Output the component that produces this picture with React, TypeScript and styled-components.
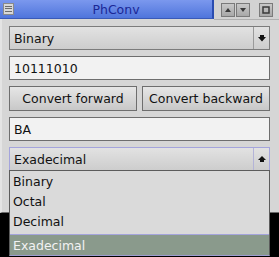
import React from 'react';
import styled, { createGlobalStyle } from 'styled-components';

const GlobalStyle = createGlobalStyle`
  html, body {
    margin: 0;
    padding: 0;
    background: #000;
  }
  body {
    font-family: "DejaVu Sans", "Liberation Sans", sans-serif;
    font-size: 12.5px;
    color: #111;
  }
`;

const Screen = styled.div`
  width: 279px;
  height: 257px;
  background: #000;
  position: relative;
  overflow: hidden;
`;

const Window = styled.div`
  width: 279px;
  height: 213px;
  box-sizing: border-box;
  background: #d6d6d6;
  border-left: 2px solid #e4e4e4;
  border-bottom: 1px solid #6a6a6a;
  display: flex;
  flex-direction: column;
`;

const TitleBar = styled.div`
  height: 20px;
  display: flex;
  margin-left: -2px;
`;

const TitleMain = styled.div`
  width: 214px;
  height: 19px;
  box-sizing: border-box;
  background: linear-gradient(#7b98ee, #4f75dc);
  border-right: 2px solid #2a4cb0;
  border-bottom: 1px solid #3a5ab8;
  display: flex;
  align-items: center;
`;

const MenuIcon = styled.div`
  width: 11px;
  height: 12px;
  margin-left: 3px;
  box-sizing: border-box;
  border: 1px solid #8a8a8a;
  background: #d8d8d8;
  display: flex;
  flex-direction: column;
  justify-content: space-around;
  padding: 1px 1px;
`;

const MenuLine = styled.div`
  height: 1px;
  background: #6c6c6c;
`;

const Title = styled.div`
  flex: 1;
  text-align: center;
  color: #1a2796;
  font-size: 12.5px;
  padding-left: 6px;
`;

const TitleButtons = styled.div`
  flex: 1;
  height: 20px;
  background: #d2d2d2;
  display: flex;
  align-items: center;
  padding-left: 7px;
  gap: 1px;
  border-bottom: 1px solid #b0b0b0;
  box-sizing: border-box;
`;

const WinButton = styled.div<{ $gap?: number }>`
  width: 14px;
  height: 14px;
  box-sizing: border-box;
  border: 1px solid #7a7a7a;
  background: linear-gradient(#c8c8c8, #a8a8a8);
  margin-left: ${p => p.$gap || 0}px;
  display: flex;
  align-items: center;
  justify-content: center;
`;

const Content = styled.div`
  flex: 1;
  display: flex;
  flex-direction: column;
  gap: 6px;
  padding: 6px 9px 0 7px;
  position: relative;
`;

const ComboBox = styled.div<{ $focused?: boolean }>`
  height: 24px;
  box-sizing: border-box;
  border: 1px solid ${p => (p.$focused ? '#a4a4dc' : '#7c7c7c')};
  background: linear-gradient(#e2e2e2, #cdcdcd);
  display: flex;
  align-items: center;
  position: relative;
`;

const ComboText = styled.div`
  flex: 1;
  padding-left: 4px;
`;

const ComboArrow = styled.div<{ $focused?: boolean }>`
  width: 15px;
  height: 100%;
  border-left: 1px solid ${p => (p.$focused ? '#b4b4d8' : '#9a9a9a')};
  display: flex;
  align-items: center;
  justify-content: center;
`;

const TextField = styled.div`
  height: 24px;
  box-sizing: border-box;
  border: 1px solid #6e6e6e;
  background: #f2f2f2;
  display: flex;
  align-items: center;
  padding-left: 4px;
`;

const ButtonRow = styled.div<{ $height?: number }>`
  display: flex;
  gap: 5px;
  height: ${p => p.$height || 25}px;
`;

const Button = styled.div`
  flex: 1;
  box-sizing: border-box;
  border: 1px solid #6e6e6e;
  background: linear-gradient(#e6e6e6, #c8c8c8);
  display: flex;
  align-items: center;
  justify-content: center;
  white-space: nowrap;
`;

const DropList = styled.div`
  position: absolute;
  left: 0;
  right: 0;
  top: 100%;
  height: 86px;
  box-sizing: border-box;
  margin: 0 -1px;
  border: 1px solid #5c5c5c;
  border-bottom-color: #9c9cd0;
  background: #dadada;
  display: flex;
  flex-direction: column;
  z-index: 5;
`;

const DropItem = styled.div<{ $selected?: boolean }>`
  height: 20px;
  display: flex;
  align-items: center;
  padding-left: 3px;
  color: ${p => (p.$selected ? '#f2f2f2' : '#111')};
  background: ${p => (p.$selected ? '#8a9a8c' : 'transparent')};
  border-top: ${p => (p.$selected ? '1px solid #a4a4dc' : 'none')};
  margin-top: ${p => (p.$selected ? 'auto' : '0')};
`;

const Arrow = ({ up }: { up?: boolean }) => (
  <svg width="8" height="7" viewBox="0 0 8 7">
    <polygon
      points={up ? '4,0 8,4 6,4 6,6 2,6 2,4 0,4' : '2,0 6,0 6,2 8,2 4,6.5 0,2 2,2'}
      fill="#111"
    />
  </svg>
);

const Tri = ({ up }: { up?: boolean }) => (
  <svg width="8" height="6" viewBox="0 0 8 6">
    <polygon points={up ? '4,1 7,5 1,5' : '1,1 7,1 4,5'} fill="#3a3a3a" />
  </svg>
);

const items = ['Binary', 'Octal', 'Decimal', 'Exadecimal'];

export default function App() {
  return (
    <Screen>
      <GlobalStyle />
      <Window>
        <TitleBar>
          <TitleMain>
            <MenuIcon>
              <MenuLine />
              <MenuLine />
              <MenuLine />
            </MenuIcon>
            <Title>PhConv</Title>
          </TitleMain>
          <TitleButtons>
            <WinButton><Tri up /></WinButton>
            <WinButton><Tri /></WinButton>
            <WinButton $gap={8}>
              <svg width="8" height="8" viewBox="0 0 8 8">
                <rect x="1" y="1" width="6" height="6" fill="none" stroke="#3a3a3a" strokeWidth="1.5" />
              </svg>
            </WinButton>
          </TitleButtons>
        </TitleBar>
        <Content>
          <ComboBox>
            <ComboText>Binary</ComboText>
            <ComboArrow><Arrow /></ComboArrow>
          </ComboBox>
          <TextField>10111010</TextField>
          <ButtonRow>
            <Button>Convert forward</Button>
            <Button>Convert backward</Button>
          </ButtonRow>
          <TextField>BA</TextField>
          <ComboBox $focused>
            <ComboText>Exadecimal</ComboText>
            <ComboArrow $focused><Arrow up /></ComboArrow>
            <DropList>
              {items.map(item => (
                <DropItem key={item} $selected={item === 'Exadecimal'}>
                  {item}
                </DropItem>
              ))}
            </DropList>
          </ComboBox>
          <ButtonRow $height={31}>
            <Button>Copy</Button>
          </ButtonRow>
        </Content>
      </Window>
    </Screen>
  );
}
